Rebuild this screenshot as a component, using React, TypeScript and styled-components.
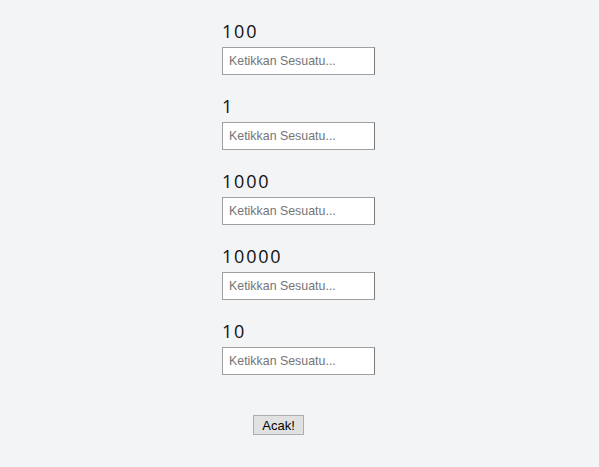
import React from "react";
import styled, { createGlobalStyle } from "styled-components";

const Global = createGlobalStyle`
  html, body { margin: 0; padding: 0; background: #f3f4f6; }
  body { font-family: "Open Sans", "DejaVu Sans", sans-serif; }
`;

const Page = styled.div`
  min-height: 467px;
  display: flex;
  justify-content: center;
  padding-top: 20px;
  box-sizing: border-box;
`;

const Column = styled.div`
  width: 155px;
  display: flex;
  flex-direction: column;
`;

const Group = styled.div`
  display: flex;
  flex-direction: column;
  margin-bottom: 20px;
`;

const Label = styled.label`
  font-family: "Open Sans", sans-serif;
  font-size: 18px;
  line-height: 22px;
  letter-spacing: 1.8px;
  color: #111;
  margin-bottom: 5px;
`;

const Input = styled.input`
  width: 153px;
  height: 28px;
  box-sizing: border-box;
  border: 1px solid #a0a0a0;
  border-right-color: #7a7a7a;
  background: #fff;
  padding: 0 6px;
  font-family: "Liberation Sans", Arial, sans-serif;
  font-size: 12.4px;
  outline: none;
  &::placeholder { color: #757575; }
`;

const Button = styled.button`
  margin-top: 20px;
  margin-left: 31px;
  align-self: flex-start;
  width: 51px;
  height: 20px;
  box-sizing: border-box;
  background: #e1e1e1;
  border: 1px solid #adadad;
  font-family: "Liberation Sans", Arial, sans-serif;
  font-size: 13px;
  color: #000;
  padding: 0;
`;

const values = ["100", "1", "1000", "10000", "10"];

export default function App() {
  return (
    <>
      <Global />
      <Page>
        <Column>
          {values.map((v) => (
            <Group key={v}>
              <Label>{v}</Label>
              <Input placeholder="Ketikkan Sesuatu..." />
            </Group>
          ))}
          <Button>Acak!</Button>
        </Column>
      </Page>
    </>
  );
}
